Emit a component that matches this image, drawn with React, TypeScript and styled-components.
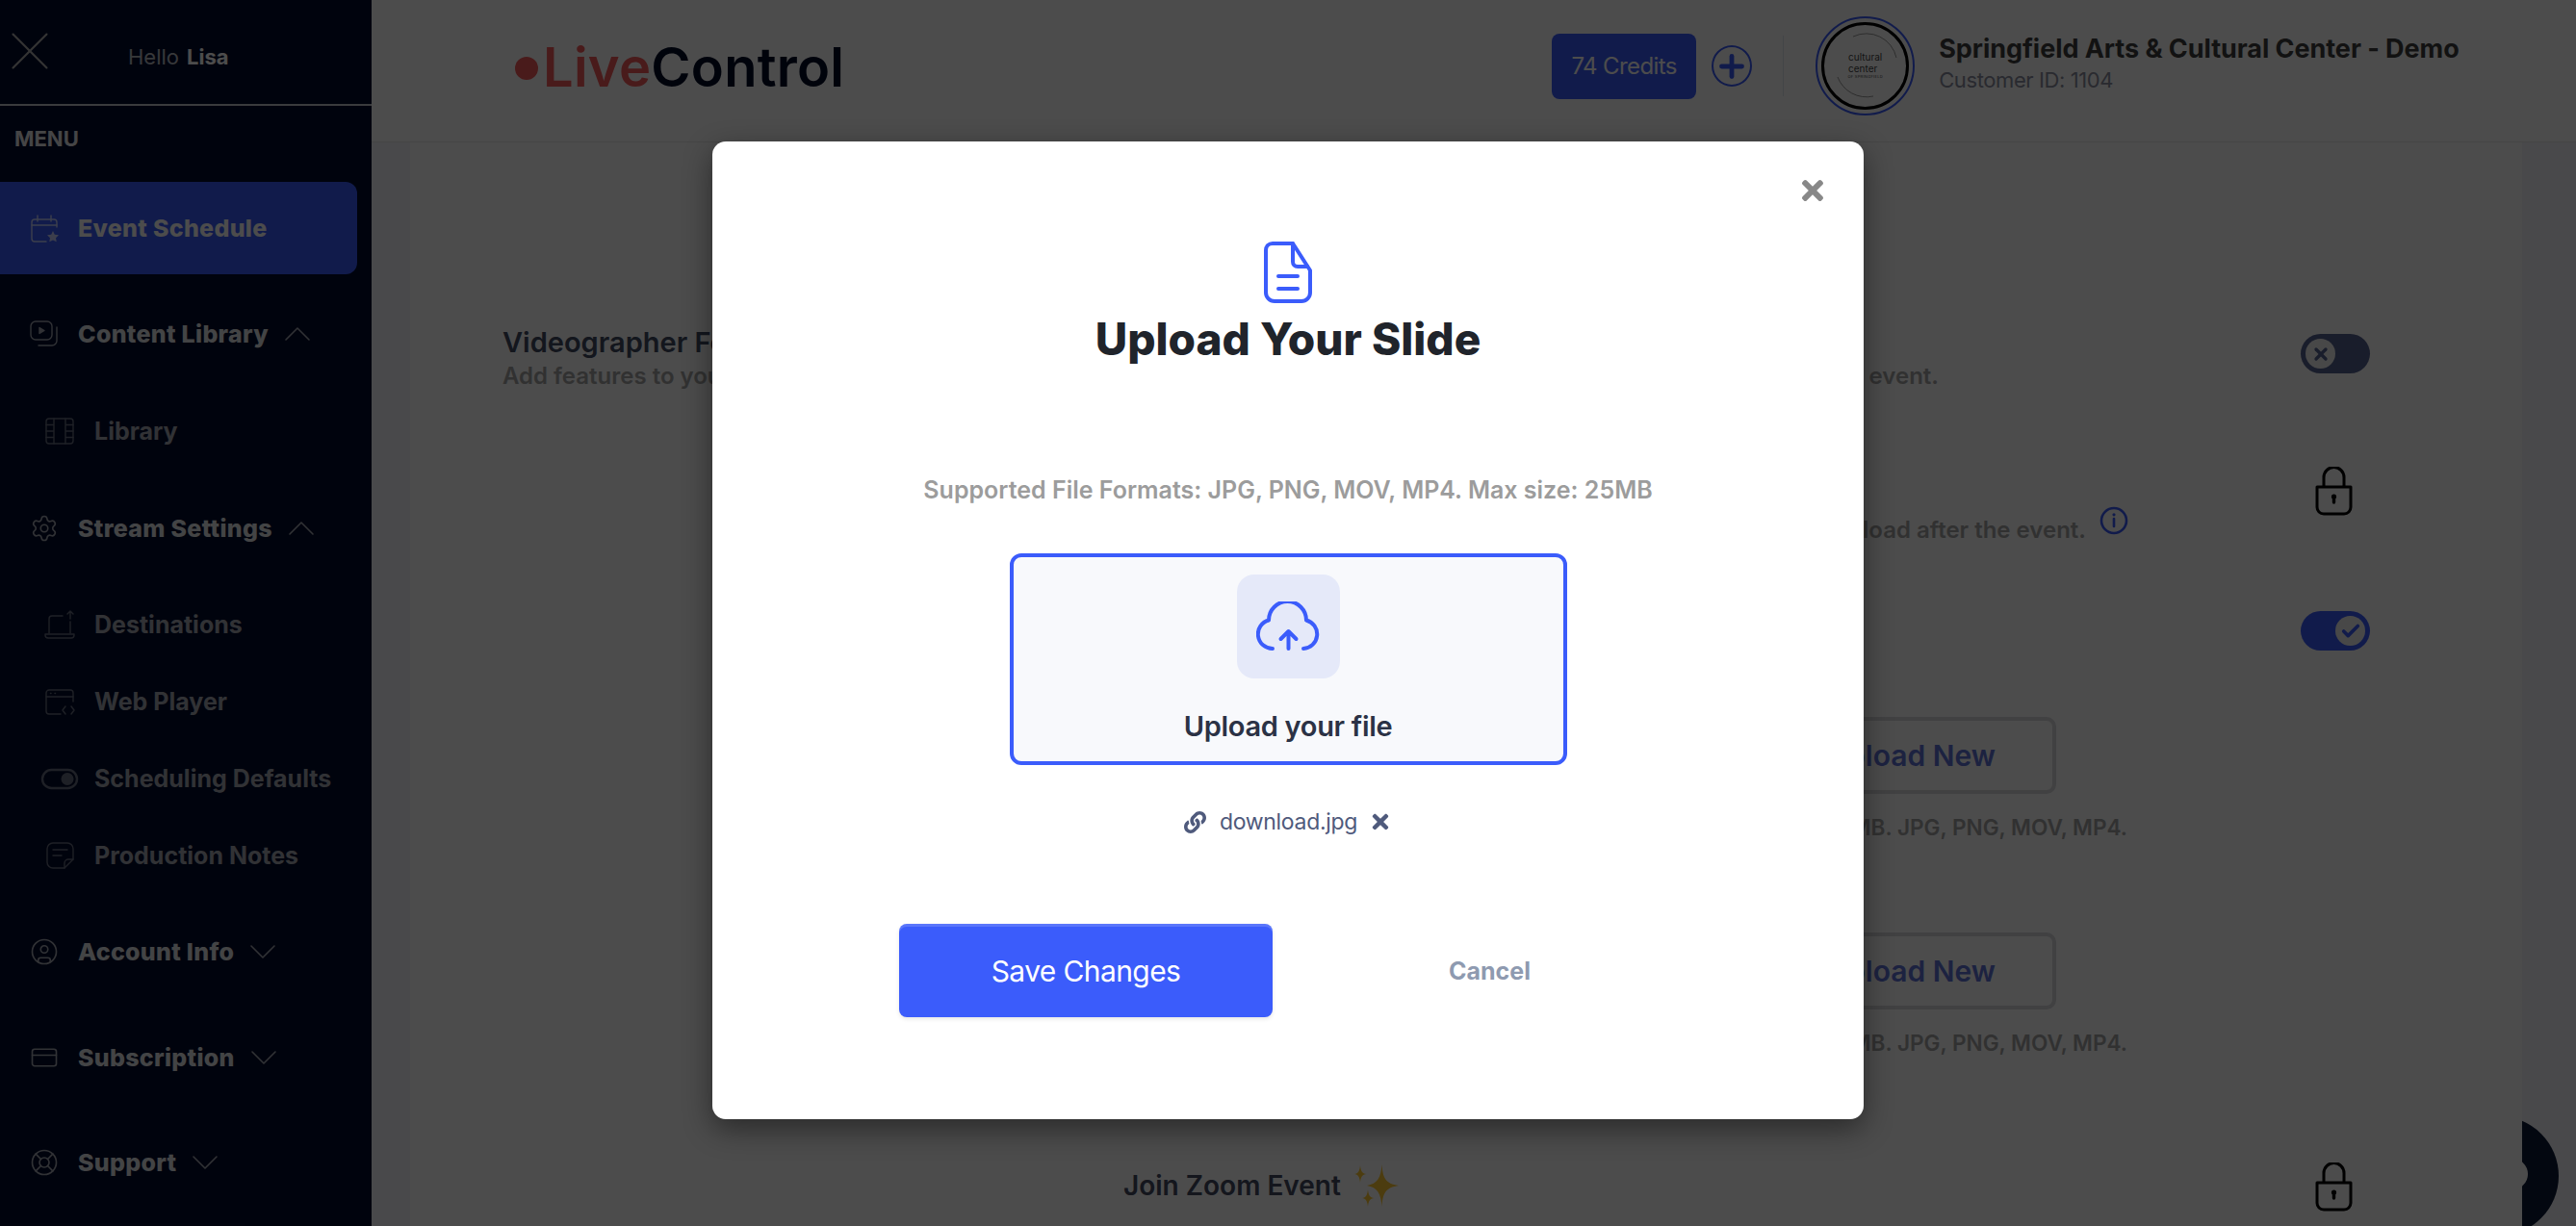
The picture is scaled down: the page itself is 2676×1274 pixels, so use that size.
import React from "react";
import styled, { createGlobalStyle } from "styled-components";
import { FaLink, FaTimes } from "react-icons/fa";
import { Plus, ChevronUp, ChevronDown, X, Check, Settings, CircleUser, CreditCard, LifeBuoy } from "lucide-react";

const BLUE = "#3b5cfb";

const GlobalStyle = createGlobalStyle`
  html, body {
    margin: 0;
    padding: 0;
    background: #f5f6fa;
  }
  * {
    box-sizing: border-box;
  }
`;

const Page = styled.div`
  position: relative;
  display: flex;
  width: 2676px;
  height: 1274px;
  overflow: hidden;
  font-family: Inter, "Liberation Sans", sans-serif;
`;

const Sidebar = styled.aside`
  flex: 0 0 386px;
  display: flex;
  flex-direction: column;
  background: #030d2e;
  color: #fff;
`;

const SideTop = styled.div`
  display: flex;
  align-items: center;
  height: 110px;
  padding: 10px 0 0 13px;
  border-bottom: 2px solid #c4c6cc;
`;

const SideClose = styled.div`
  display: flex;
  align-items: center;
  justify-content: center;
  width: 35px;
  height: 35px;
  margin-top: -12px;
  color: #b0b0b0;

  svg {
    flex: none;
  }
`;

const Hello = styled.div`
  margin-left: 85px;
  font-size: 22px;
  font-weight: 400;
  color: #b9bcc4;

  b {
    margin-left: 8px;
    font-weight: 700;
    color: #fff;
  }
`;

const MenuLabel = styled.div`
  height: 79px;
  padding: 22px 0 0 15px;
  font-size: 22px;
  line-height: 24px;
  font-weight: 700;
  color: #e8e8ea;
`;

const NavRow = styled.div<{ $mt?: number; $active?: boolean }>`
  display: flex;
  align-items: center;
  height: ${({ $active }) => ($active ? 96 : 64)}px;
  width: 371px;
  margin-top: ${({ $mt }) => $mt ?? 0}px;
  padding-left: 31px;
  border-radius: 0 12px 12px 0;
  background: ${({ $active }) => ($active ? BLUE : "transparent")};
  color: ${({ $active }) => ($active ? "#fff" : "#e2e3e6")};

  svg {
    flex: none;
    opacity: 0.72;
  }
`;

const NavText = styled.span`
  margin-left: 20px;
  font-size: 25px;
  font-weight: 800;
  letter-spacing: 0.3px;
  white-space: nowrap;
`;

const Caret = styled.span`
  display: flex;
  margin-left: 6px;
`;

const SubRow = styled.div<{ $mt?: number }>`
  display: flex;
  align-items: center;
  height: 80px;
  margin-top: ${({ $mt }) => $mt ?? 0}px;
  padding-left: 47px;
  color: #a4a7b2;

  svg {
    flex: none;
    opacity: 0.62;
  }
`;

const SubText = styled.span`
  margin-left: 21px;
  font-size: 25px;
  font-weight: 700;
  white-space: nowrap;
`;

const Main = styled.div`
  flex: 1;
  display: flex;
  flex-direction: column;
  min-width: 0;
`;

const Header = styled.header`
  flex: 0 0 148px;
  display: flex;
  align-items: center;
  padding-left: 149px;
  background: #fff;
  border-bottom: 1px solid #e8e8e8;
`;

const Logo = styled.div`
  display: flex;
  align-items: center;
  font-size: 56px;
  font-weight: 600;
  letter-spacing: 0.25px;
  color: #020a26;
  margin-top: -8px;

  span {
    color: #f55c5c;
  }
`;

const LogoDot = styled.i`
  width: 24px;
  height: 24px;
  margin-right: 5px;
  margin-top: 3px;
  border-radius: 50%;
  background: #f55c5c;
`;

const Credits = styled.div`
  display: flex;
  align-items: center;
  justify-content: center;
  width: 150px;
  height: 68px;
  margin-left: 735px;
  margin-top: -10px;
  border-radius: 8px;
  background: ${BLUE};
  color: #fff;
  font-size: 24px;
  letter-spacing: -0.6px;
`;

const PlusButton = styled.div`
  display: flex;
  align-items: center;
  justify-content: center;
  width: 42px;
  height: 43px;
  margin-left: 16px;
  margin-top: -10px;
  border: 2px solid ${BLUE};
  border-radius: 50%;
  color: ${BLUE};
`;

const Divider = styled.div`
  width: 1px;
  height: 63px;
  margin-left: 32px;
  margin-top: -10px;
  background: #e2e6ee;
`;

const Avatar = styled.div`
  display: flex;
  align-items: center;
  justify-content: center;
  width: 103px;
  height: 103px;
  margin-left: 33px;
  margin-top: -11px;
  border: 2px solid ${BLUE};
  border-radius: 50%;
`;

const AvatarInner = styled.div`
  position: relative;
  display: flex;
  flex-direction: column;
  align-items: center;
  justify-content: center;
  width: 91px;
  height: 91px;
  border: 3px solid #000;
  border-radius: 50%;
  font-size: 10px;
  line-height: 12px;
  color: #444;

  small {
    font-size: 4px;
    line-height: 6px;
    letter-spacing: 0.3px;
  }
`;

const AvatarArcs = styled.svg`
  position: absolute;
  left: 0;
  top: 0;
`;

const Org = styled.div`
  margin-left: 25px;
  margin-top: -16px;
`;

const OrgName = styled.div`
  font-size: 27px;
  line-height: 34px;
  font-weight: 700;
  letter-spacing: -0.05px;
  color: #3f3f3f;
  white-space: nowrap;
`;

const OrgId = styled.div`
  margin-top: 1px;
  font-size: 22px;
  line-height: 28px;
  color: #8b8e9f;
  letter-spacing: -0.4px;
`;

const Body = styled.div`
  flex: 1;
  display: flex;
  min-height: 0;
`;

const Gutter = styled.div<{ $w: number }>`
  position: relative;
  flex: 0 0 ${({ $w }) => $w}px;
  overflow: hidden;
  background: #f5f6fa;
`;

const ChatBubble = styled.div`
  position: absolute;
  left: -86px;
  top: 1012px;
  width: 124px;
  height: 124px;
  border-radius: 50%;
  background: #0d1a38;

  &::after {
    content: "";
    position: absolute;
    left: 60px;
    top: 44px;
    width: 32px;
    height: 32px;
    border-radius: 50%;
    background: #fff;
  }
`;

const Card = styled.main`
  flex: 1;
  display: flex;
  flex-direction: column;
  padding-top: 190px;
  background: #fff;
  overflow: hidden;
`;

const FeatureHead = styled.section`
  display: flex;
  align-items: flex-start;
  justify-content: space-between;
  padding: 0 158px 0 96px;
`;

const HeadTitle = styled.div`
  font-size: 29px;
  line-height: 35px;
  font-weight: 600;
  color: #424a62;
`;

const HeadText = styled.div`
  display: flex;
  justify-content: space-between;
  width: 1492px;
  font-size: 24px;
  line-height: 36px;
  font-weight: 600;
  color: #a6a6a6;
`;

const Row = styled.section<{ $mt: number }>`
  display: flex;
  justify-content: space-between;
  margin-top: ${({ $mt }) => $mt}px;
  padding: 0 158px 0 741px;
`;

const RowTitle = styled.div`
  display: flex;
  align-items: center;
  gap: 14px;
  height: 48px;
  font-size: 28px;
  font-weight: 600;
  color: #434a62;
`;

const RowText = styled.div`
  display: flex;
  justify-content: flex-end;
  width: 1044px;
  font-size: 24px;
  line-height: 36px;
  font-weight: 600;
  color: #a6a6a6;
  white-space: nowrap;
`;

const InfoMark = styled.svg`
  margin: -7px 0 0 14px;
  flex: none;
`;

const Slot = styled.div`
  flex: 0 0 72px;
  display: flex;
  justify-content: center;
  padding-right: 3px;
`;

const Toggle = styled.div<{ $on?: boolean }>`
  display: flex;
  align-items: center;
  justify-content: ${({ $on }) => ($on ? "flex-end" : "flex-start")};
  width: 72px;
  height: 41px;
  padding: 0 5px;
  border-radius: 21px;
  background: ${({ $on }) => ($on ? BLUE : "#566290")};
`;

const HeadToggle = styled(Toggle)`
  margin-top: 9px;
`;

const Knob = styled.div<{ $on?: boolean }>`
  display: flex;
  align-items: center;
  justify-content: center;
  width: 31px;
  height: 31px;
  border-radius: 50%;
  background: #f2f2f2;
  color: ${({ $on }) => ($on ? BLUE : "#566290")};
`;

const UploadColumn = styled.div`
  display: flex;
  flex-direction: column;
  align-items: flex-end;
  width: 1043px;
`;

const UploadNew = styled.div`
  display: flex;
  align-items: center;
  justify-content: flex-end;
  width: 380px;
  height: 80px;
  margin-right: 74px;
  padding-right: 59px;
  border: 4px solid #d9d9de;
  border-radius: 10px;
  font-size: 30px;
  font-weight: 600;
  color: #5f72d8;
`;

const Caption = styled.div`
  margin-top: 20px;
  font-size: 22.6px;
  line-height: 30px;
  font-weight: 600;
  color: #a6a6a6;
  white-space: nowrap;
`;

const Overlay = styled.div`
  position: absolute;
  inset: 0;
  background: rgba(0, 0, 0, 0.7);
`;

const Modal = styled.div`
  position: absolute;
  left: 740px;
  top: 147px;
  display: flex;
  flex-direction: column;
  align-items: center;
  width: 1196px;
  height: 1016px;
  padding-top: 104px;
  border-radius: 14px;
  background: #fff;
  box-shadow: 0 10px 30px rgba(0, 0, 0, 0.45);
`;

const CloseBtn = styled.div`
  position: absolute;
  top: 35px;
  right: 37px;
  display: flex;
  color: #888;
`;

const ModalTitle = styled.h1`
  margin: 7px 0 0;
  font-size: 46px;
  line-height: 60px;
  font-weight: 800;
  color: #20242b;
`;

const Formats = styled.p`
  margin: 111px 0 0;
  font-size: 25px;
  line-height: 32px;
  font-weight: 600;
  color: #9c9c9c;
`;

const DropZone = styled.div`
  display: flex;
  flex-direction: column;
  align-items: center;
  width: 579px;
  height: 220px;
  margin-top: 50px;
  padding-top: 18px;
  border: 4px solid ${BLUE};
  border-radius: 12px;
  background: #f8f9fc;
`;

const CloudTile = styled.div`
  display: flex;
  align-items: center;
  justify-content: center;
  width: 107px;
  height: 108px;
  border-radius: 18px;
  background: #e5e9f9;
`;

const DropLabel = styled.div`
  margin-top: 30px;
  font-size: 29px;
  line-height: 40px;
  font-weight: 600;
  letter-spacing: -0.3px;
  color: #2b3245;
`;

const FileRow = styled.div`
  display: flex;
  align-items: center;
  height: 30px;
  margin-top: 44px;
  color: #4f5a7c;
`;

const FileName = styled.span`
  margin: 0 12px 0 14px;
  font-size: 23px;
  letter-spacing: -0.3px;
`;

const Actions = styled.div`
  display: flex;
  align-items: center;
  width: 1196px;
  margin-top: 91px;
  padding-left: 194px;
`;

const SaveButton = styled.button`
  width: 388px;
  height: 97px;
  border: 0;
  border-radius: 8px;
  background: ${BLUE};
  box-shadow: inset 0 3px 0 rgba(255, 255, 255, 0.16), 0 2px 4px rgba(0, 0, 0, 0.1);
  color: #fff;
  font-family: inherit;
  font-size: 30px;
  letter-spacing: -0.6px;
`;

const CancelButton = styled.button`
  margin-left: 183px;
  padding: 0;
  border: 0;
  background: none;
  color: #8e9ab0;
  font-family: inherit;
  font-size: 25px;
  font-weight: 700;
`;

const navIcon = { size: 30, strokeWidth: 1.3 };
const caret = { size: 48, strokeWidth: 0.8 };

// line icons from the sidebar, the lucide ones don't have these shapes
const Glyph = ({ children }: { children: React.ReactNode }) => (
  <svg
    width="30"
    height="30"
    viewBox="0 0 30 30"
    fill="none"
    stroke="currentColor"
    strokeWidth="1.4"
    strokeLinecap="round"
    strokeLinejoin="round"
    overflow="visible"
  >
    {children}
  </svg>
);

const CalendarStar = () => (
  <Glyph>
    <path d="M28 14V9a3 3 0 0 0-3-3H5a3 3 0 0 0-3 3v17a3 3 0 0 0 3 3h12" />
    <path d="M2 12h26M8 2v6M22 2v6" />
    <path
      d="M24 18l1.800 3.700 4.200.6-3 2.900.7 4.100-3.700-1.900-3.700 1.900.7-4.100-3-2.900 4.200-.6z"
      fill="currentColor"
      stroke="none"
    />
  </Glyph>
);

const ContentBox = () => (
  <Glyph>
    <rect x="1" y="2" width="22" height="19" rx="5" />
    <path d="M10 8.500l5 3-5 3z" fill="currentColor" />
    <path d="M28 8v14a5 5 0 0 1-5 5H9" />
  </Glyph>
);

const FilmStrip = () => (
  <Glyph>
    <rect x="1" y="2" width="28" height="26" rx="3" />
    <path d="M9 2v26M21 2v26M1 8.500h8M1 15h8M1 21.500h8M21 8.500h8M21 15h8M21 21.500h8" />
  </Glyph>
);

const LaptopUp = () => (
  <Glyph>
    <path d="M4 24V9a3 3 0 0 1 3-3h11M26 12v12" />
    <path d="M0 25h30v1a3 3 0 0 1-3 3H3a3 3 0 0 1-3-3z" />
    <path d="M26 9V1M23 4l3-3 3 3" />
  </Glyph>
);

const WebWindow = () => (
  <Glyph>
    <path d="M29 15V6a3 3 0 0 0-3-3H4a3 3 0 0 0-3 3v19a3 3 0 0 0 3 3h12" />
    <path d="M1 10h28M5.500 6.500h.5M10 6.500h.5" />
    <path d="M21 20l-3 4 3 4M27 20l3 4-3 4" />
  </Glyph>
);

const SwitchGlyph = () => (
  <Glyph>
    <rect x="-3" y="6" width="36" height="19" rx="9.500" strokeWidth="2.400" />
    <circle cx="23" cy="15.500" r="6.500" fill="currentColor" stroke="none" />
  </Glyph>
);

const NoteGlyph = () => (
  <Glyph>
    <path d="M20 28H8a6 6 0 0 1-6-6V8a6 6 0 0 1 6-6h15a6 6 0 0 1 6 6v11z" />
    <path d="M20 28v-5a4 4 0 0 1 4-4h5M8 9h15M8 15h9" />
  </Glyph>
);

const Info = () => (
  <InfoMark width="30" height="30" viewBox="0 0 30 30" fill="none">
    <circle cx="15" cy="15" r="13" stroke={BLUE} strokeWidth="2.600" />
    <path d="M15 13v8" stroke={BLUE} strokeWidth="2.600" strokeLinecap="round" />
    <circle cx="15" cy="8.800" r="1.600" fill={BLUE} />
  </InfoMark>
);

const Lock = () => (
  <svg width="39" height="51" viewBox="0 0 39 51" fill="none" stroke="#000" strokeWidth="3">
    <path d="M9 21V11a10.500 10.500 0 0 1 21 0v10" />
    <path d="M2 21h35v21c0 4-3 7-7 7H9c-4 0-7-3-7-7z" strokeLinejoin="round" />
    <path d="M19.500 31v6" strokeWidth="3.400" strokeLinecap="round" />
    <circle cx="19.500" cy="31" r="2.600" fill="#000" stroke="none" />
  </svg>
);

const Sparkles = () => (
  <svg width="46" height="44" viewBox="0 0 46 44" fill="#ffc832">
    <path d="M28.500 0C29.500 14 32 20 46 22 32 24 29.500 30 28.500 44 27.500 30 24 24 13 22 24 20 27.500 14 28.500 0z" />
    <path d="M6 1C6.500 7 8 9.500 12.500 10 8 10.500 6.500 13 6 19 5.500 13 4 10.500 0 10 4 9.500 5.500 7 6 1z" />
    <path d="M14 26C14.500 32 16 34.500 20.500 35 16 35.500 14.500 38 14 44 13.500 38 12 35.500 8 35 12 34.500 13.500 32 14 26z" />
  </svg>
);

const FileIcon = () => (
  <svg width="50" height="64" viewBox="0 0 50 64" fill="none" stroke={BLUE} strokeWidth="4" strokeLinejoin="round" strokeLinecap="round">
    <path d="M9 2h21l18 28v23c0 5-4 9-9 9H11c-5 0-9-4-9-9V9c0-4 3-7 7-7z" />
    <path d="M30 2v19c0 3 2 5 5 5h10" />
    <path d="M15 36h20M15 49h20" />
  </svg>
);

const CloudIcon = () => (
  <svg width="66" height="52" viewBox="0 0 66 52" fill="none" stroke={BLUE} strokeWidth="4" strokeLinecap="round" strokeLinejoin="round">
    <path d="M17 49a15 15 0 0 1-4-29.500 A19.500 19.500 0 0 1 52 19.500a15 15 0 0 1-3 29.500" />
    <path d="M33.500 49V31M25.500 39l8-8 8 8" />
  </svg>
);

export default function App() {
  return (
    <Page>
      <GlobalStyle />
      <Sidebar>
        <SideTop>
          <SideClose>
            <X size={70} strokeWidth={0.7} />
          </SideClose>
          <Hello>
            Hello<b>Lisa</b>
          </Hello>
        </SideTop>
        <MenuLabel>MENU</MenuLabel>
        <NavRow $active>
          <CalendarStar />
          <NavText>Event Schedule</NavText>
        </NavRow>
        <NavRow $mt={30}>
          <ContentBox />
          <NavText>Content Library</NavText>
          <Caret>
            <ChevronUp {...caret} />
          </Caret>
        </NavRow>
        <SubRow $mt={29}>
          <FilmStrip />
          <SubText>Library</SubText>
        </SubRow>
        <NavRow $mt={29}>
          <Settings {...navIcon} />
          <NavText>Stream Settings</NavText>
          <Caret>
            <ChevronUp {...caret} />
          </Caret>
        </NavRow>
        <SubRow $mt={28}>
          <LaptopUp />
          <SubText>Destinations</SubText>
        </SubRow>
        <SubRow>
          <WebWindow />
          <SubText>Web Player</SubText>
        </SubRow>
        <SubRow>
          <SwitchGlyph />
          <SubText>Scheduling Defaults</SubText>
        </SubRow>
        <SubRow>
          <NoteGlyph />
          <SubText>Production Notes</SubText>
        </SubRow>
        <NavRow $mt={28}>
          <CircleUser {...navIcon} />
          <NavText>Account Info</NavText>
          <Caret>
            <ChevronDown {...caret} />
          </Caret>
        </NavRow>
        <NavRow $mt={46}>
          <CreditCard {...navIcon} />
          <NavText>Subscription</NavText>
          <Caret>
            <ChevronDown {...caret} />
          </Caret>
        </NavRow>
        <NavRow $mt={45}>
          <LifeBuoy {...navIcon} />
          <NavText>Support</NavText>
          <Caret>
            <ChevronDown {...caret} />
          </Caret>
        </NavRow>
      </Sidebar>

      <Main>
        <Header>
          <Logo>
            <LogoDot />
            <span>Live</span>Control
          </Logo>
          <Credits>74 Credits</Credits>
          <PlusButton>
            <Plus size={36} strokeWidth={3.2} />
          </PlusButton>
          <Divider />
          <Avatar>
            <AvatarInner>
              <AvatarArcs width="85" height="85" viewBox="0 0 85 85" fill="none" stroke="#999" strokeWidth="1">
                <path d="M30 12a32 32 0 0 1 45 22" />
                <path d="M14 54a32 32 0 0 0 37 20" />
              </AvatarArcs>
              cultural
              <br />
              center
              <small>OF SPRINGFIELD</small>
            </AvatarInner>
          </Avatar>
          <Org>
            <OrgName>Springfield Arts &amp; Cultural Center - Demo</OrgName>
            <OrgId>Customer ID: 1104</OrgId>
          </Org>
        </Header>

        <Body>
          <Gutter $w={40} />
          <Card>
            <FeatureHead>
              <div>
                <HeadTitle>Videographer Features</HeadTitle>
                <HeadText>
                  <span>Add features to your stream</span>
                  <span>event.</span>
                </HeadText>
              </div>
              <HeadToggle>
                <Knob>
                  <X size={20} strokeWidth={4} />
                </Knob>
              </HeadToggle>
            </FeatureHead>

            <Row $mt={76}>
              <div>
                <RowTitle />
                <RowText>
                  Have a videographer record your stream and send you a download after the event.
                  <Info />
                </RowText>
              </div>
              <Slot>
                <Lock />
              </Slot>
            </Row>

            <Row $mt={66}>
              <div />
              <Toggle $on>
                <Knob $on>
                  <Check size={22} strokeWidth={4} />
                </Knob>
              </Toggle>
            </Row>

            <Row $mt={69}>
              <UploadColumn>
                <UploadNew>Upload New</UploadNew>
                <Caption>Max file size 50MB. JPG, PNG, MOV, MP4.</Caption>
              </UploadColumn>
            </Row>

            <Row $mt={94}>
              <UploadColumn>
                <UploadNew>Upload New</UploadNew>
                <Caption>Max file size 50MB. JPG, PNG, MOV, MP4.</Caption>
              </UploadColumn>
            </Row>

            <Row $mt={109}>
              <div>
                <RowTitle>
                  Join Zoom Event
                  <Sparkles />
                </RowTitle>
              </div>
              <Slot>
                <Lock />
              </Slot>
            </Row>
          </Card>
          <Gutter $w={56}>
            <ChatBubble />
          </Gutter>
        </Body>
      </Main>

      <Overlay />

      <Modal>
        <CloseBtn>
          <FaTimes size={32} />
        </CloseBtn>
        <FileIcon />
        <ModalTitle>Upload Your Slide</ModalTitle>
        <Formats>Supported File Formats: JPG, PNG, MOV, MP4. Max size: 25MB</Formats>
        <DropZone>
          <CloudTile>
            <CloudIcon />
          </CloudTile>
          <DropLabel>Upload your file</DropLabel>
        </DropZone>
        <FileRow>
          <FaLink size={23} />
          <FileName>download.jpg</FileName>
          <FaTimes size={24} />
        </FileRow>
        <Actions>
          <SaveButton>Save Changes</SaveButton>
          <CancelButton>Cancel</CancelButton>
        </Actions>
      </Modal>
    </Page>
  );
}
